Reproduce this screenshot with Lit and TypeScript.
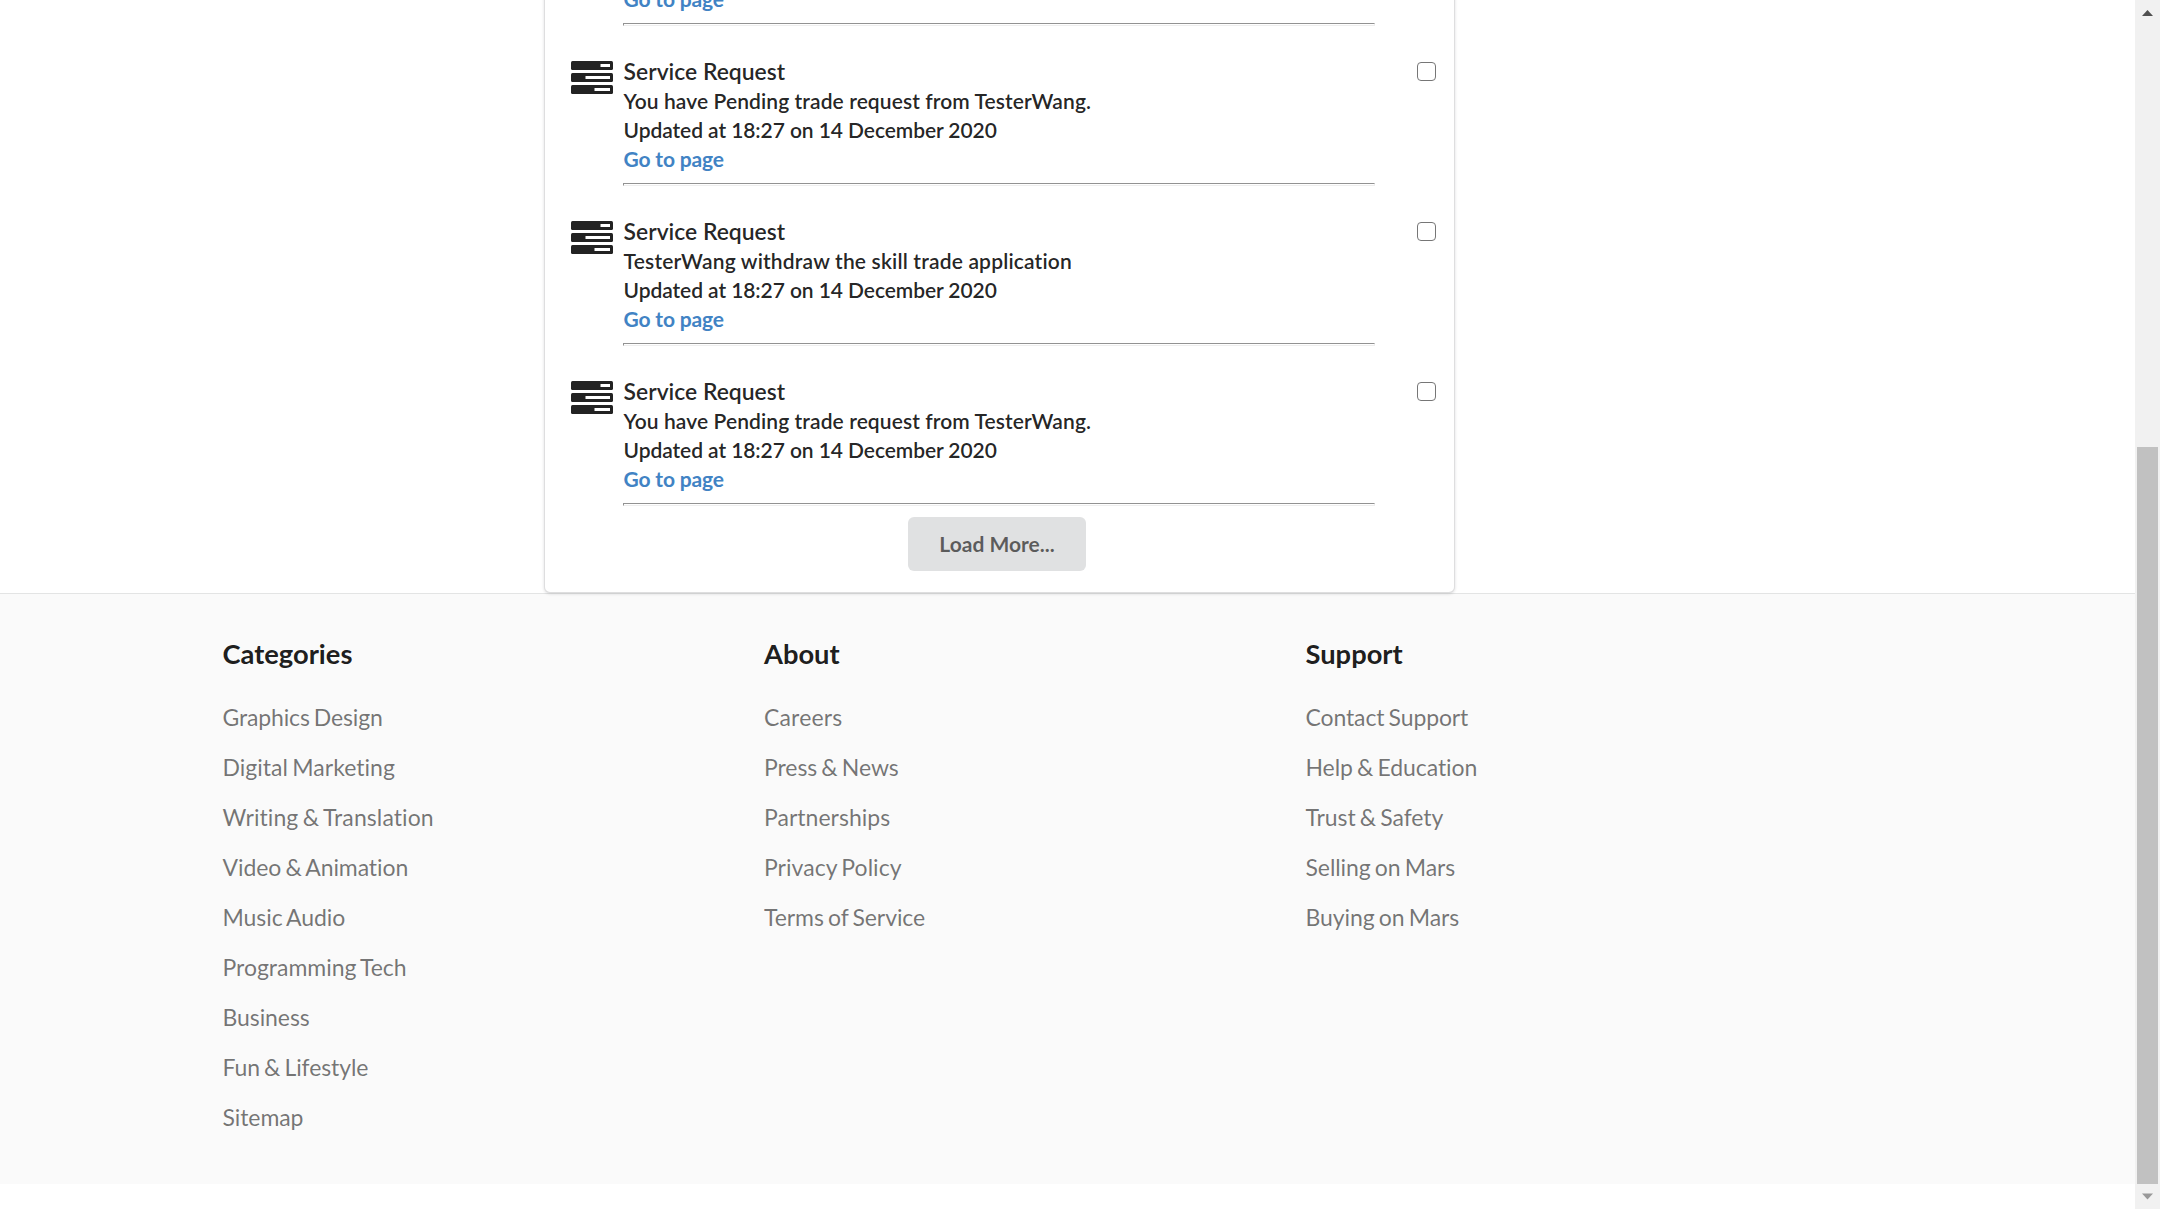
import { LitElement, html, css } from "lit";
import { customElement } from "lit/decorators.js";
import { styleMap } from "lit/directives/style-map.js";

type Link = [label: string, tracking?: number];
const columns: { title: string; links: Link[] }[] = [
  { title: "Categories", links: [["Graphics Design", -0.15], ["Digital Marketing", 0.02], ["Writing & Translation", 0.09], ["Video & Animation"], ["Music Audio"], ["Programming Tech", -0.03], ["Business"], ["Fun & Lifestyle", -0.12], ["Sitemap"]] },
  { title: "About", links: [["Careers", 0.15], ["Press & News"], ["Partnerships", 0.02], ["Privacy Policy", 0.03], ["Terms of Service"]] },
  { title: "Support", links: [["Contact Support", -0.12], ["Help & Education"], ["Trust & Safety"], ["Selling on Mars"], ["Buying on Mars"]] },
];
type Notice = [message: string, tracking: number];
const pending: Notice = ["You have Pending trade request from TesterWang.", 0.09];
const withdrawn: Notice = ["TesterWang withdraw the skill trade application", 0.17];
const notices = [withdrawn, pending, withdrawn, pending];

@customElement("app-root")
export class AppRoot extends LitElement {
  static styles = css`
    :host { display: flex; width: 2160px; height: 1209px; overflow: hidden; background: #fff; font-family: Lato, "Liberation Sans", sans-serif; font-size: 21px; color: rgba(0,0,0,.87); font-variant-ligatures: none; }
    * { box-sizing: border-box; }
    .page { flex: 1; display: flex; flex-direction: column; height: 1209px; }
    .top { height: 593px; flex: none; display: flex; align-items: flex-end; padding-left: 544px; }
    .card { position: relative; width: 911px; flex: none; border: 1px solid rgba(34,36,38,.15); border-radius: 6px; box-shadow: 0 1px 3px rgba(34,36,38,.15); background: #fff; padding: 0 18px 21px 25.500px; }
    .item { display: flex; height: 160px; }
    .icon { width: 42px; height: 33px; margin: 35px 10.500px 0 0; flex: none; display: block; }
    .body { width: 752px; display: flex; flex-direction: column; padding-top: 30px; font-weight: 600; line-height: 29px; white-space: nowrap; }
    .text { padding-left: .600px; }
    .title { font-size: 22.900px; line-height: 30px; }
    .date { letter-spacing: -.08px; }
    .link { color: #4183c4; font-weight: 700; letter-spacing: -.180px; padding-top: 1px; line-height: 28px; }
    .rule { margin-top: auto; height: 3px; border: 1px solid #929292; border-right-color: #eee; border-bottom-color: #eee; }
    .check { appearance: none; margin: 36px 0 0 auto; width: 19px; height: 19px; border: 1px solid #767676; border-radius: 4px; background: #fff; }
    .more { display: block; margin: 11px 0 0 337.500px; width: 178px; height: 54px; padding: 0 0 2px; border: 0; border-radius: 6px; background: #e0e1e2; color: rgba(0,0,0,.6); font: 700 21px Lato, sans-serif; }
    .footer { flex: none; height: 591px; border-top: 1px solid #e3e4e4; background: #fafafa; display: flex; padding: 42px 0 0 222.500px; }
    .col { width: 541.5px; }
    .heading { font-size: 27.300px; font-weight: 700; line-height: 36px; color: rgba(0,0,0,.9); }
    .flink { font-size: 23px; line-height: 30px; margin-top: 20px; color: rgba(0,0,0,.55); word-spacing: -1.600px; }
    .heading + .flink { margin-top: 30px; }
    .bar { width: 25px; flex: none; background: #f1f1f1; display: flex; flex-direction: column; align-items: center; }
    .arrow { display: block; width: 25px; height: 25px; }
    .thumb { width: 21px; height: 737px; margin-top: 422px; background: #c1c1c1; }
  `;
  render() {
    return html`
      <div class="page">
        <div class="top"><div class="card">
          ${notices.map(([message, tracking]) => html`<div class="item">
            <svg class="icon" viewBox="0 0 42 33">
              <g fill="#222"><rect width="42" height="9" rx="1.500"/><rect y="12" width="42" height="9" rx="1.500"/><rect y="24" width="42" height="9" rx="1.500"/></g>
              <g fill="#fff"><rect x="29.500" y="3" width="9.500" height="3"/><rect x="14.500" y="15" width="24.500" height="3"/><rect x="23.500" y="27" width="15.500" height="3"/></g>
            </svg>
            <div class="body">
              <div class="text title">Service Request</div>
              <div class="text" style=${styleMap({ letterSpacing: `${tracking}px` })}>${message}</div>
              <div class="text date">Updated at 18:27 on 14 December 2020</div>
              <div class="text link">Go to page</div>
              <div class="rule"></div>
            </div>
            <input type="checkbox" class="check" />
          </div>`)}
          <button class="more">Load More...</button>
        </div></div>
        <div class="footer">${columns.map((c) => html`<div class="col">
          <div class="heading">${c.title}</div>
          ${c.links.map(([label, tracking = -0.08]) => html`<div class="flink" style=${styleMap({ letterSpacing: `${tracking}px` })}>${label}</div>`)}
        </div>`)}</div>
      </div>
      <div class="bar">
        <svg class="arrow" viewBox="0 0 25 25"><path fill="#505050" d="M7 16l5.500-6 5.500 6z"/></svg>
        <div class="thumb"></div>
        <svg class="arrow" viewBox="0 0 25 25"><path fill="#999" d="M7 9.500l5.500 6 5.500-6z"/></svg>
      </div>`;
  }
}
